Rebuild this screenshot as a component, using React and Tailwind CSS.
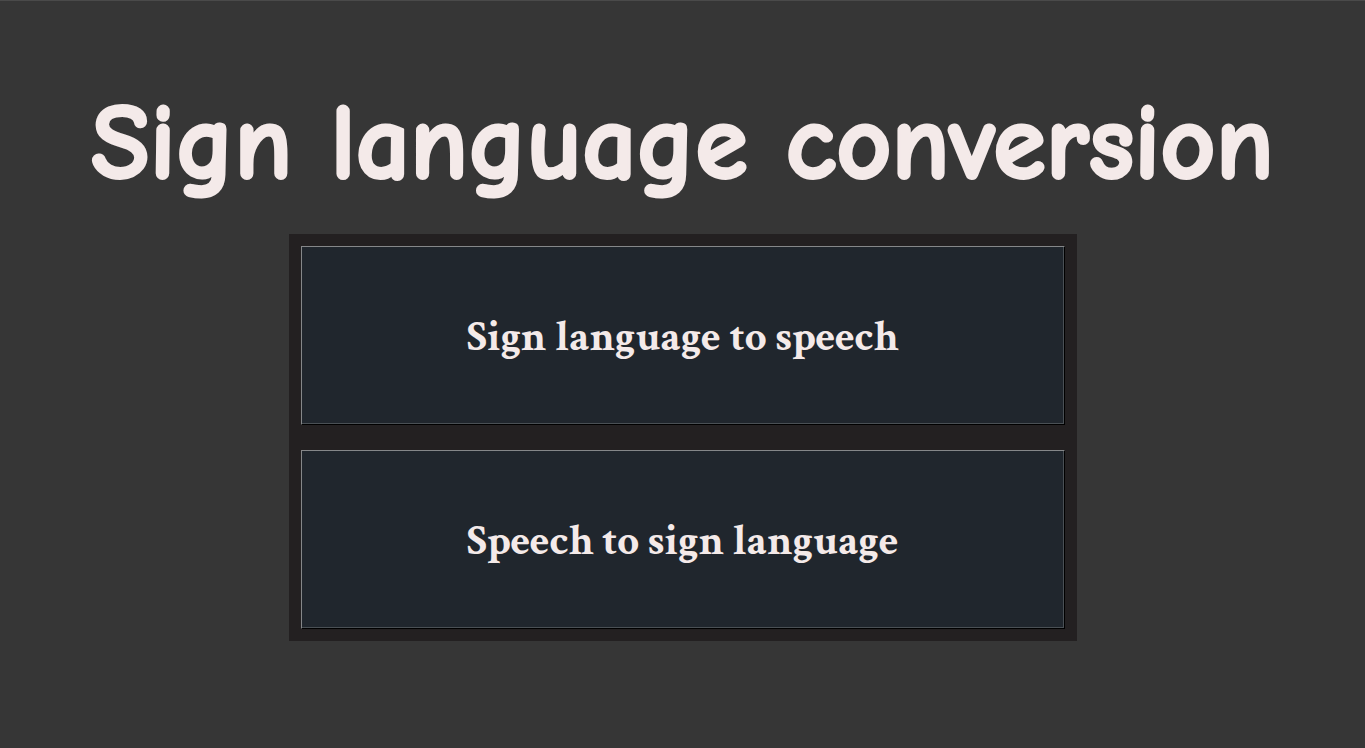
const options = ["Sign language to speech", "Speech to sign language"];

export default function App() {
  return (
    <main className="flex min-h-screen flex-col items-center border-t border-[#4a4a4a] bg-[#363636] pt-20 pb-12 text-[#f4eae9]">
      <h1 className="text-center text-[107px] leading-[125px] font-bold whitespace-nowrap font-['Comic_Sans_MS','Comic_Neue',cursive] [-webkit-text-stroke:3px_#f4eae9]">
        Sign language conversion
      </h1>
      <div className="mt-7 flex w-[788px] max-w-full flex-col gap-[25px] bg-[#232021] p-3">
        {options.map((label) => (
          <button
            key={label}
            type="button"
            className="h-[179px] w-full border border-t-[#858789] border-r-black border-b-black border-l-[#858789] bg-[#20262d] pt-0.5 text-[43px] leading-[48px] font-bold font-['Crimson_Text','Crimson_Pro','Liberation_Serif',serif] shadow-[inset_-1px_-1px_0_#4a5055]"
          >
            {label}
          </button>
        ))}
      </div>
    </main>
  );
}
